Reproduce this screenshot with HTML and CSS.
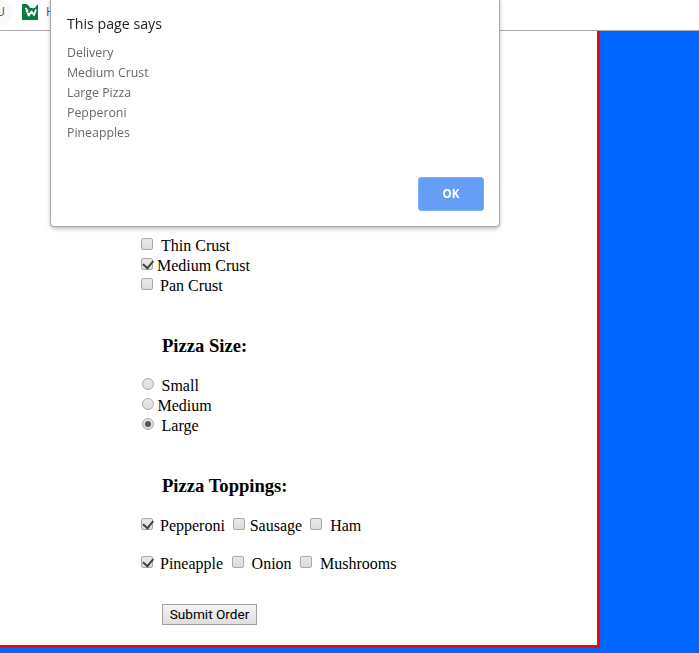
FILE: index.html
```html
<!DOCTYPE html>
<html lang="en">
<head>
<meta charset="utf-8">
<title>Pizza Order</title>
<link rel="stylesheet" href="styles.css">
</head>
<body>
<header class="bookmarks">
  <span class="chip">U</span>
  <svg class="logo" width="16" height="16" viewBox="0 0 16 16"><path fill="#087b43" d="M0 0h5L7 1.500 8 4H13L14.500 1 16 .5V16H0z"/><path fill="#fff" d="M5 0H15L14 2.500 11 4.500 9 3.500 6.500 1.500z"/><path fill="none" stroke="#fff" stroke-width="1.900" stroke-linejoin="round" d="M3.500 4 5.500 6.500 4 8M5.500 8.500 6.800 11.500 9.500 7.500l2.500 3.500L14 5.500"/></svg>
  <span class="mark">H</span>
</header>
<main class="page">
  <form class="order">
    <div class="row"><i class="box"></i><span class="wide">Thin Crust</span></div>
    <div class="row"><i class="box on"></i><span>Medium Crust</span></div>
    <div class="row"><i class="box"></i><span class="mid">Pan Crust</span></div>
    <h3>Pizza Size:</h3>
    <div class="row radios"><i class="radio"></i><span class="wide">Small</span></div>
    <div class="row radios"><i class="radio"></i><span>Medium</span></div>
    <div class="row radios"><i class="radio on"></i><span class="wide">Large</span></div>
    <h3>Pizza Toppings:</h3>
    <div class="row toppings"><i class="box on"></i><span class="mid">Pepperoni</span><i class="box"></i><span>Sausage</span><i class="box"></i><span class="mid">Ham</span></div>
    <div class="row toppings second"><i class="box on"></i><span class="mid">Pineapple</span><i class="box"></i><span class="mid">Onion</span><i class="box"></i><span class="mid">Mushrooms</span></div>
    <button class="submit" type="button">Submit Order</button>
  </form>
</main>
<section class="dialog">
  <h1>This page says</h1>
  <p>Delivery<br>Medium Crust<br>Large Pizza<br>Pepperoni<br>Pineapples</p>
  <button class="ok" type="button">OK</button>
</section>
</body>
</html>
```
FILE: styles.css
```css
* { box-sizing: border-box; }
body {
  margin: 0;
  height: 653px;
  overflow: hidden;
  background: #06f;
  color: #000;
  font: 16px/20px "Liberation Serif", serif;
}
.bookmarks {
  display: flex;
  height: 31px;
  background: #fff;
  border-bottom: 1px solid #aaa;
  font: 12px/24px "Open Sans", sans-serif;
  color: #555;
}
.chip {
  width: 12px;
  height: 26px;
  padding-right: 7px;
  border-radius: 0 13px 13px 0;
  background: #fafafa;
  display: flex;
  justify-content: flex-end;
}
.logo { margin: 4px 8px 0 10px; }
.page {
  width: 600px;
  height: 617px;
  background: #fff;
  border: solid #f00;
  border-width: 0 3px 3px 0;
}
.order { padding: 205px 0 0 141px; }
.row { display: flex; height: 20px; white-space: nowrap; }
.row span { margin: 0 8px 0 4px; }
.row .wide { margin-left: 8px; }
.row .mid { margin-left: 7px; }
.radios { padding-left: 1px; }
.radios span { position: relative; left: -0.5px; }
.toppings span { margin-right: 8.300px; }
.toppings .mid + .box + .mid, .toppings span:not(.mid) + .box + .mid { margin-left: 7.800px; }
.toppings .mid + .box + span:not(.mid) { margin-left: 4.500px; }
.second { margin-top: 18px; }
.second .mid { margin-right: 8.700px; }
.box, .radio {
  flex: none;
  width: 12px;
  height: 12px;
  margin-top: 2px;
  border: 1px solid #a9a9a9;
  border-radius: 2px;
  background: linear-gradient(#e9e9e9, #dcdcdc);
}
.box.on::after {
  content: "";
  display: block;
  width: 4.500px;
  height: 8px;
  margin: 0 0 0 3px;
  border: solid #404040;
  border-width: 0 2px 2px 0;
  transform: translate(-0.3px, -0.8px) rotate(40deg);
}
.radio { border-radius: 50%; }
.radio.on { display: grid; place-items: center; }
.radio.on::after {
  content: "";
  width: 6px;
  height: 6px;
  border-radius: 50%;
  background: #555;
}
h3 {
  margin: 40px 0 20px 21px;
  font-size: 18.600px;
  line-height: 20px;
}
.submit {
  display: block;
  width: 95px;
  height: 21px;
  margin: 30px 0 0 21px;
  padding: 0;
  border: 1px solid #a0a0a0;
  border-radius: 0;
  background: linear-gradient(#f4f4f4, #dedede);
  color: #000;
  font: 13.600px/19px Roboto, sans-serif;
  white-space: nowrap;
}
.dialog {
  position: fixed;
  top: -2px;
  left: 51px;
  display: flex;
  flex-direction: column;
  width: 448px;
  height: 228px;
  padding: 16px 15px 15px 16px;
  background: #fff;
  border-radius: 0 0 3px 3px;
  box-shadow: 0 0 0 1px #aaa, 0 2px 5px rgba(0, 0, 0, .35);
  font-family: "Open Sans", sans-serif;
}
.dialog h1 {
  margin: 0;
  font-size: 14.200px;
  font-weight: 400;
  line-height: 20px;
  color: #222;
}
.dialog p {
  margin: 9px 0 0;
  font-size: 12.350px;
  line-height: 20px;
  color: #686868;
}
.ok {
  width: 66px;
  height: 34px;
  margin: auto 0 0 auto;
  padding: 0;
  border: 1px solid #7eacf9;
  border-radius: 3px;
  background: #669df6;
  color: #fff;
  font: 700 11.500px/30px "Open Sans", sans-serif;
}
```
